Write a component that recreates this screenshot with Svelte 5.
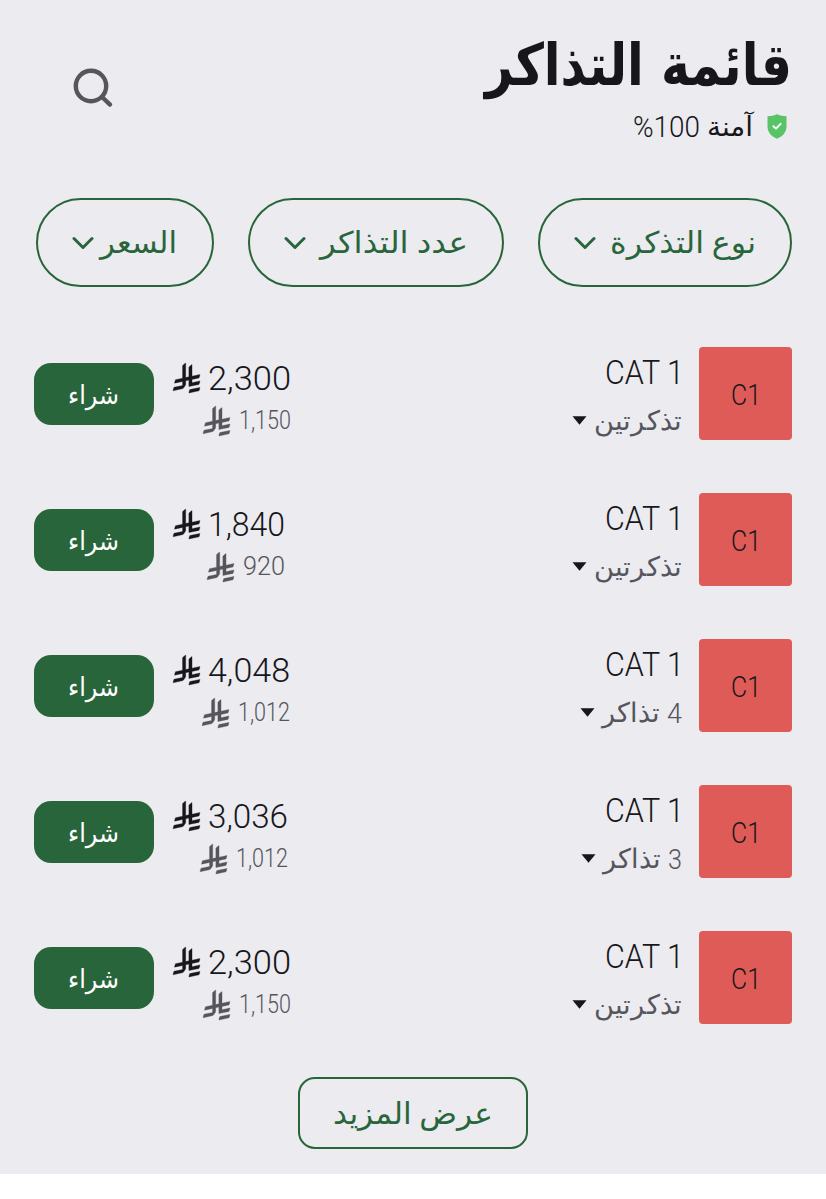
<script lang="ts">
  interface Label {
    text: string
    width: number
  }

  interface Ticket {
    count?: Label
    unit: Label
    total: Label
    each: Label
  }

  const filters = [
    { text: 'نوع التذكرة', width: 146, size: 'type' },
    { text: 'عدد التذاكر', width: 148, size: 'amount' },
    { text: 'السعر', width: 77, size: 'price' }
  ]

  const pair = { text: 'تذكرتين', width: 88 }
  const many = { text: 'تذاكر', width: 58 }

  const tickets: Ticket[] = [
    { unit: pair, total: { text: '2,300', width: 83 }, each: { text: '1,150', width: 52 } },
    { unit: pair, total: { text: '1,840', width: 77 }, each: { text: '920', width: 42 } },
    { count: { text: '4', width: 15 }, unit: many, total: { text: '4,048', width: 82 }, each: { text: '1,012', width: 52 } },
    { count: { text: '3', width: 14 }, unit: many, total: { text: '3,036', width: 80 }, each: { text: '1,012', width: 52 } },
    { unit: pair, total: { text: '2,300', width: 83 }, each: { text: '1,150', width: 52 } }
  ]
</script>

<!-- Text set to an exact width, baseline given from the top of its box -->
{#snippet fit(text: string, width: number, height: number, baseline: number)}
  <svg class="fit" {width} {height} direction="ltr">
    <text x={width / 2} y={baseline} text-anchor="middle" textLength={width} lengthAdjust="spacingAndGlyphs">{text}</text>
  </svg>
{/snippet}

{#snippet riyal()}
  <svg class="riyal" viewBox="0 0 1124.14 1256.39" width="27" height="30">
    <path d="M699.62,1113.02c-20.06,44.48-33.32,92.75-38.4,143.37l424.51-90.24c20.06-44.47,33.31-92.75,38.4-143.37l-424.51,90.24Z" />
    <path d="M1085.73,895.8c20.06-44.47,33.32-92.75,38.4-143.37l-330.68,70.33v-135.2l292.27-62.11c20.06-44.47,33.32-92.75,38.4-143.37l-330.68,70.27V66.13c-50.67,28.45-95.67,66.32-132.25,110.99v403.35l-132.25,28.11V0c-50.67,28.44-95.67,66.32-132.25,110.99v525.69l-295.91,62.88c-20.06,44.47-33.33,92.75-38.42,143.37l334.33-71.05v170.26l-358.3,76.14c-20.06,44.47-33.32,92.75-38.4,143.37l375.04-79.7c30.53-6.35,56.77-24.4,73.83-49.24l68.78-101.97c7.14-10.55,11.3-23.27,11.3-36.99v-149.98l132.25-28.11v270.4l424.53-90.28Z" />
  </svg>
{/snippet}

<main dir="rtl">
  <header>
    <div class="heading">
      <h1>{@render fit('قائمة التذاكر', 307, 80, 61)}</h1>
      <div class="secure">
        <svg class="shield" width="20" height="25" viewBox="0 0 20 25">
          <path d="M10 0.3C12.5 1.6 16 2.2 19.5 2.2V12C19.5 18.5 15.5 22.7 10 24.7C4.5 22.7 .5 18.5 .5 12V2.2C4 2.2 7.5 1.6 10 .3Z" fill="#58c466" />
          <path d="M6.4 12.2L9 14.6L13.6 9.8" fill="none" stroke="#fff" stroke-width="1.9" stroke-linecap="round" stroke-linejoin="round" />
        </svg>
        <span class="safe">{@render fit('آمنة', 46, 36, 26)}</span>
        <span class="percent">{@render fit('%100', 67, 36, 26.5)}</span>
      </div>
    </div>
    <button class="search" aria-label="بحث">
      <svg width="42" height="42" viewBox="0 0 42 42">
        <circle cx="19" cy="19" r="15.2" />
        <path d="M30 30L38 37.6" />
      </svg>
    </button>
  </header>

  <nav>
    {#each filters as filter}
      <button class="filter {filter.size}">
        {@render fit(filter.text, filter.width, 40, 30)}
        <svg class="chevron" width="22" height="14" viewBox="0 0 22 14">
          <path d="M2 2.5L11 11.5L20 2.5" />
        </svg>
      </button>
    {/each}
  </nav>

  <ul>
    {#each tickets as ticket}
      <li>
        <div class="tile">{@render fit('C1', 30, 36, 26)}</div>
        <div class="info">
          <div class="category">{@render fit('CAT 1', 79, 40, 37)}</div>
          <div class="quantity">
            {#if ticket.count}
              {@render fit(ticket.count.text, ticket.count.width, 40, 35.5)}
            {/if}
            {@render fit(ticket.unit.text, ticket.unit.width, 40, 35)}
            <svg class="caret" width="15" height="9" viewBox="0 0 15 9">
              <path d="M.5 .3H14.5L7.5 8.7Z" />
            </svg>
          </div>
        </div>
        <div class="prices" dir="ltr">
          <div class="total">
            {@render riyal()}
            {@render fit(ticket.total.text, ticket.total.width, 36, 30)}
          </div>
          <div class="each">
            {@render riyal()}
            {@render fit(ticket.each.text, ticket.each.width, 36, 27)}
          </div>
        </div>
        <button class="buy">{@render fit('شراء', 51, 36, 28)}</button>
      </li>
    {/each}
  </ul>

  <button class="more">{@render fit('عرض المزيد', 160, 40, 31)}</button>
</main>

<style>
  :global(body) {
    background: #fff;
  }

  main {
    display: flex;
    flex-direction: column;
    box-sizing: border-box;
    width: 826px;
    height: 1174px;
    padding: 24px 34px 0;
    background: #ebebf0;
    color: #17171b;
    font-family: Roboto, 'DejaVu Sans', sans-serif;
  }

  button {
    padding: 0;
    border: 0;
    background: none;
    color: inherit;
    font: inherit;
    cursor: pointer;
  }

  .fit {
    display: block;
    flex: none;
    overflow: visible;
    fill: currentColor;
  }

  header {
    display: flex;
    justify-content: space-between;
    height: 174px;
  }

  h1 {
    margin: 0;
    font-family: 'DejaVu Sans', sans-serif;
    font-size: 58px;
    font-weight: 700;
  }

  .secure {
    display: flex;
    align-items: center;
    height: 36px;
    margin-top: 6px;
    padding-right: 5px;
  }

  .shield {
    margin-left: 14px;
    margin-bottom: 4px;
  }

  .safe {
    font-size: 27px;
  }

  .percent {
    margin-right: 7px;
    font-size: 29px;
    font-weight: 300;
  }

  .search {
    width: 42px;
    height: 42px;
    margin: 43px 0 0 38px;
  }

  .search svg {
    display: block;
    fill: none;
    stroke: #55555c;
    stroke-width: 4.4;
    stroke-linecap: round;
  }

  nav {
    display: flex;
    justify-content: space-between;
    padding-left: 2px;
  }

  .filter {
    display: flex;
    align-items: center;
    justify-content: space-between;
    box-sizing: border-box;
    height: 89px;
    padding: 0 34px;
    border: 2px solid #29653b;
    border-radius: 45px;
    color: #29653b;
    font-size: 30px;
  }

  .type {
    width: 254px;
  }

  .amount {
    width: 256px;
  }

  .price {
    width: 178px;
    padding-right: 35px;
  }

  .chevron path {
    fill: none;
    stroke: #29653b;
    stroke-width: 3;
    stroke-linecap: round;
    stroke-linejoin: round;
  }

  ul {
    display: flex;
    flex-direction: column;
    gap: 53px;
    margin: 60px 0 0;
    padding: 0;
    list-style: none;
  }

  li {
    display: flex;
    height: 93px;
  }

  .tile {
    display: flex;
    align-items: center;
    justify-content: center;
    box-sizing: border-box;
    width: 93px;
    padding-top: 6px;
    border-radius: 4px;
    background: #de5b57;
    font-size: 29px;
    font-weight: 300;
  }

  .info {
    flex: 1;
    padding-right: 17px;
  }

  .category {
    margin-right: -2px;
    font-size: 34px;
    font-weight: 300;
  }

  .quantity {
    display: flex;
    gap: 7px;
    margin-top: 8px;
    color: #55555c;
    font-size: 27px;
    font-weight: 300;
  }

  .caret {
    margin-top: 21px;
    fill: #17171b;
  }

  .prices {
    display: flex;
    flex-direction: column;
    align-items: flex-end;
    padding-top: 13px;
  }

  .total,
  .each {
    display: flex;
    height: 36px;
    font-weight: 300;
  }

  .total {
    gap: 8px;
    font-size: 34px;
  }

  .each {
    gap: 9px;
    margin-top: 6px;
    color: #55555c;
    font-size: 26px;
  }

  .riyal {
    margin-top: 4px;
    overflow: visible;
    fill: currentColor;
    stroke: currentColor;
    stroke-width: 14;
  }

  .total .riyal {
    margin-top: 3px;
  }

  .buy {
    display: flex;
    align-items: center;
    justify-content: center;
    width: 120px;
    height: 62px;
    margin: 16px 19px 0 0;
    padding-right: 2px;
    border-radius: 17px;
    background: #29653b;
    color: #fff;
    font-size: 26px;
  }

  .more {
    display: flex;
    align-items: center;
    justify-content: center;
    box-sizing: border-box;
    align-self: center;
    width: 230px;
    height: 72px;
    margin-top: 53px;
    border: 2px solid #29653b;
    border-radius: 17px;
    color: #29653b;
    font-size: 30px;
  }
</style>
